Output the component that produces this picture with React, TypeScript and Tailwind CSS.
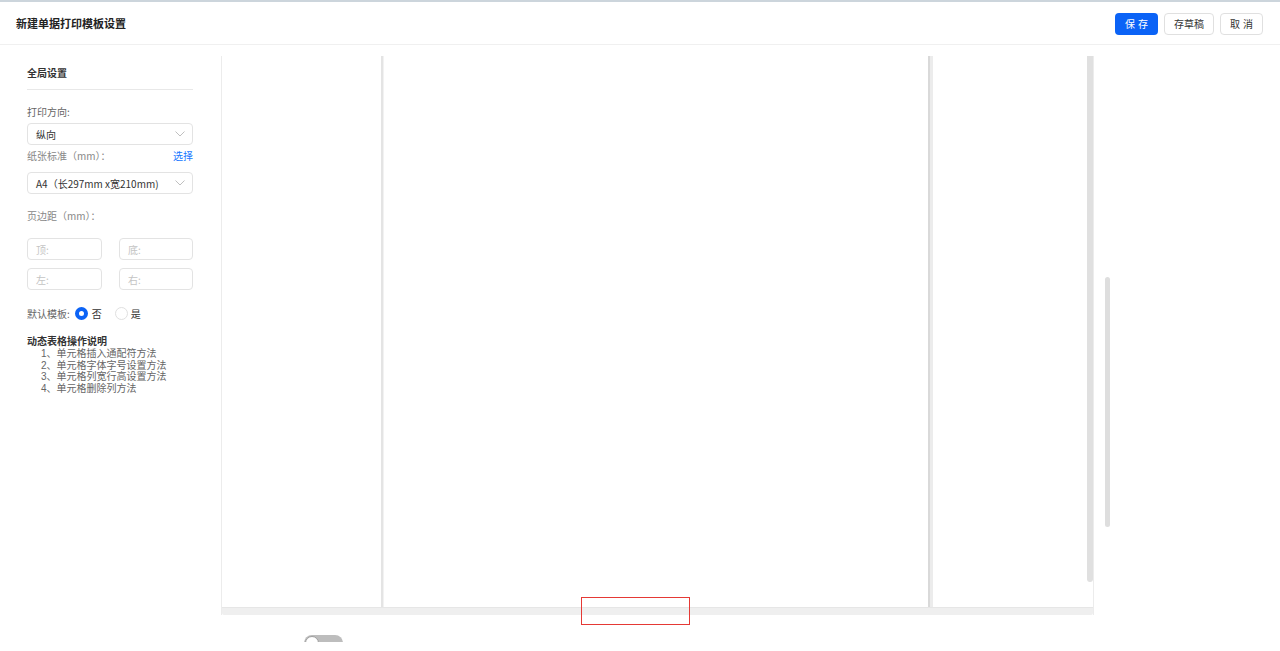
import React from "react";

const Chevron = () => (
  <svg width="10" height="6" viewBox="0 0 10 6" className="shrink-0">
    <polyline points="0.5,0.5 5,5 9.5,0.5" fill="none" stroke="#bfbfbf" strokeWidth="1" />
  </svg>
);

const Select = ({ value }: { value: string }) => (
  <div className="h-[22px] rounded-[4px] border border-[#e3e3e3] flex items-center justify-between pl-[8px] pr-[7px] text-[10px] text-[#333]">
    <span>{value}</span>
    <Chevron />
  </div>
);

const Input = ({ ph }: { ph: string }) => (
  <div className="h-[22px] rounded-[4px] border border-[#e3e3e3] flex items-center pl-[8px] text-[10px] text-[#c4c4c4]">
    {ph}
  </div>
);

export default function App() {
  return (
    <div
      className="w-[1280px] h-[651px] overflow-hidden bg-white text-[#333]"
      style={{ fontFamily: '"Noto Sans CJK SC", "Liberation Sans", sans-serif' }}
    >
      {/* Header */}
      <div className="h-[45px] border-t-[2px] border-t-[#ccd5dc] border-b border-b-[#f0f0f0] flex items-center justify-between pl-[16px] pr-[17px]">
        <div className="text-[11px] font-bold text-[#222] leading-[16px]">新建单据打印模板设置</div>
        <div className="flex items-center gap-[6px] mt-[1px]">
          <button className="h-[22px] w-[43px] rounded-[4px] bg-[#0b63f6] text-white text-[10px] tracking-[3px] pl-[3px]">保存</button>
          <button className="h-[22px] w-[50px] rounded-[4px] border border-[#e0e0e0] bg-white text-[#333] text-[10px]">存草稿</button>
          <button className="h-[22px] w-[43px] rounded-[4px] border border-[#e0e0e0] bg-white text-[#333] text-[10px] tracking-[3px] pl-[3px]">取消</button>
        </div>
      </div>

      {/* Body */}
      <div className="flex">
        {/* Sidebar */}
        <div className="w-[221px] shrink-0 pl-[27px] pr-[28px] pt-[20px]">
          <div className="text-[10px] font-bold leading-[16px] text-[#333]">全局设置</div>
          <div className="mt-[8px] h-px bg-[#e8e8e8]" />
          <div className="mt-[14px] text-[10px] leading-[16px] text-[#666]">打印方向:</div>
          <div className="mt-[3px]">
            <Select value="纵向" />
          </div>
          <div className="mt-[3px] flex justify-between text-[10px] leading-[16px]">
            <span className="text-[#888]">纸张标准（mm）：</span>
            <span className="text-[#1677ff]">选择</span>
          </div>
          <div className="mt-[8px]">
            <Select value="A4（长297mm x宽210mm)" />
          </div>
          <div className="mt-[14px] text-[10px] leading-[16px] text-[#888]">页边距（mm）：</div>
          <div className="mt-[14px] grid grid-cols-[75px_74px] justify-between gap-y-[8px]">
            <Input ph="顶:" />
            <Input ph="底:" />
            <Input ph="左:" />
            <Input ph="右:" />
          </div>
          <div className="mt-[15px] flex items-center h-[16px] text-[10px] text-[#666]">
            <span>默认模板:</span>
            <span className="ml-[5px] w-[13px] h-[13px] rounded-full border-[4px] border-[#0b63f6] bg-white" />
            <span className="ml-[4px] text-[#333]">否</span>
            <span className="ml-[13px] w-[13px] h-[13px] rounded-full border border-[#e0e0e0] bg-white" />
            <span className="ml-[3px] text-[#333]">是</span>
          </div>
          <div className="mt-[14px] text-[10px] font-bold leading-[12px] text-[#333]">动态表格操作说明</div>
          <div
            className="mt-[1px] pl-[14px] text-[10px] leading-[11.5px] text-[#666]"
            style={{ fontFamily: '"Liberation Sans", "Noto Sans CJK SC", sans-serif' }}
          >
            <div>1、单元格插入通配符方法</div>
            <div>2、单元格字体字号设置方法</div>
            <div>3、单元格列宽行高设置方法</div>
            <div>4、单元格删除列方法</div>
          </div>
        </div>

        {/* Canvas column */}
        <div className="pt-[11px]">
          <div className="relative w-[873px] h-[559px] flex flex-col border-l border-r border-[#ececec]">
            <div className="flex flex-1 min-h-0">
              <div className="w-[159px] bg-white" />
              <div className="w-[2px] bg-[#e4e4e4]" />
              <div className="w-[1px] bg-[#f2f2f2]" />
              <div className="w-[544px] bg-white" />
              <div className="w-[2px] bg-[#d9d9d9]" />
              <div className="w-[3px] bg-[#ececec]" />
              <div className="w-[154px] bg-white" />
              <div className="w-[6px] flex flex-col">
                <div className="h-[526px] rounded-b-[3px] bg-[#e0e0e0]" />
              </div>
            </div>
            <div className="h-[8px] bg-[#efefef] border-t border-[#e6e6e6] rounded-b-[2px]" />
            <div className="absolute left-[359px] top-[541px] w-[109px] h-[28px] border border-[#e53935]" />
          </div>
          <div className="mt-[20px] ml-[83px] h-[7px] overflow-hidden">
            <div className="w-[39px] h-[16px] rounded-full bg-[#bdbdbd] relative">
              <div className="absolute left-[1px] top-[1px] w-[14px] h-[14px] rounded-full bg-white border border-[#9e9e9e]" />
            </div>
          </div>
        </div>

        {/* Page scrollbar */}
        <div className="ml-[11px] mt-[232px] w-[5px] h-[250px] rounded-[3px] bg-[#dedede]" />
      </div>
    </div>
  );
}
